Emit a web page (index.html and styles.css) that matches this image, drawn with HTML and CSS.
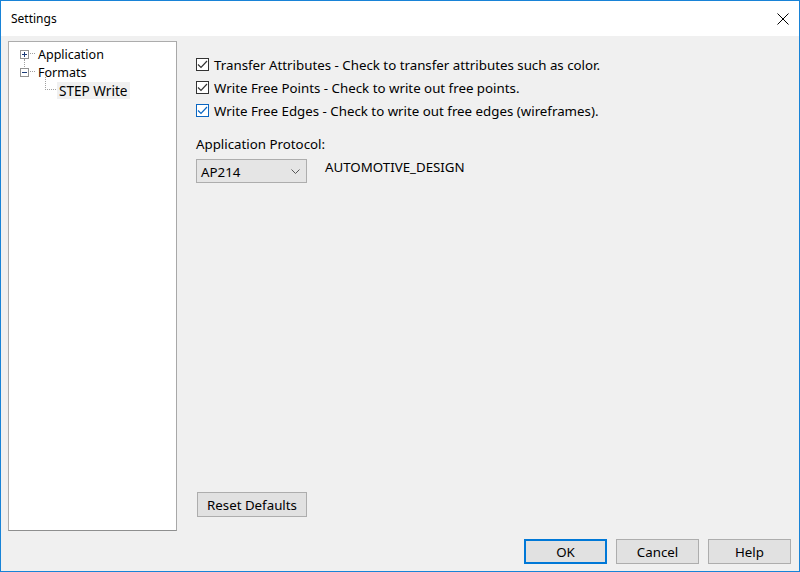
FILE: index.html
```html
<!DOCTYPE html>
<html lang="en">
<head>
  <meta charset="UTF-8" />
  <title>Settings</title>
  <link rel="stylesheet" href="styles.css">
</head>
<body>
  <div class="window">
    <div class="titlebar">
      <span class="title">Settings</span>
      <svg class="close" width="12" height="12" viewBox="0 0 12 12">
        <path d="M0.5 0.5 L11.5 11.5 M11.5 0.5 L0.5 11.5" stroke="#000" stroke-width="1" fill="none"/>
      </svg>
    </div>
    <div class="client">
      <div class="main">
        <div class="tree">
          <div class="node">
            <span class="expander">
              <svg width="9" height="9" viewBox="0 0 9 9">
                <rect x="0.5" y="0.5" width="8" height="8" fill="#fff" stroke="#919191"/>
                <path d="M2 4.5 H7 M4.5 2 V7" stroke="#1c3c78" stroke-width="1"/>
              </svg>
            </span>
            <span class="dots"></span>
            <span class="label">Application</span>
          </div>
          <div class="node">
            <span class="expander">
              <svg width="9" height="9" viewBox="0 0 9 9">
                <rect x="0.5" y="0.5" width="8" height="8" fill="#fff" stroke="#919191"/>
                <path d="M2 4.5 H7" stroke="#1c3c78" stroke-width="1"/>
              </svg>
            </span>
            <span class="dots"></span>
            <span class="label">Formats</span>
          </div>
          <div class="node child">
            <span class="elbow"></span>
            <span class="label selected">STEP Write</span>
          </div>
        </div>

        <div class="panel">
          <label class="check">
            <span class="box"><svg width="11" height="9" viewBox="0 0 11 9"><path d="M1 4.5 L4 7.5 L10 1" stroke="#333" stroke-width="1.2" fill="none"/></svg></span>
            Transfer Attributes - Check to transfer attributes such as color.
          </label>
          <label class="check">
            <span class="box"><svg width="11" height="9" viewBox="0 0 11 9"><path d="M1 4.5 L4 7.5 L10 1" stroke="#333" stroke-width="1.2" fill="none"/></svg></span>
            Write Free Points - Check to write out free points.
          </label>
          <label class="check">
            <span class="box focus"><svg width="11" height="9" viewBox="0 0 11 9"><path d="M1 4.5 L4 7.5 L10 1" stroke="#0a66c2" stroke-width="1.2" fill="none"/></svg></span>
            Write Free Edges - Check to write out free edges (wireframes).
          </label>

          <div class="field-label">Application Protocol:</div>
          <div class="protocol">
            <div class="combo">
              <span>AP214</span>
              <svg width="9" height="5" viewBox="0 0 9 5"><path d="M0.5 0.5 L4.5 4.5 L8.5 0.5" stroke="#555" fill="none"/></svg>
            </div>
            <span class="protocol-name">AUTOMOTIVE_DESIGN</span>
          </div>

          <div class="spacer"></div>
          <button class="btn reset">Reset Defaults</button>
        </div>
      </div>

      <div class="actions">
        <button class="btn default">OK</button>
        <button class="btn">Cancel</button>
        <button class="btn">Help</button>
      </div>
    </div>
  </div>
</body>
</html>
```

FILE: styles.css
```css
/* Classic Windows 10 dialog look */
body {
  margin: 0;
  font-family: 'Noto Sans', 'Open Sans', sans-serif;
  font-size: 13.3px;
  color: #000;
  background: #fff;
}
.window {
  width: 800px;
  height: 572px;
  box-sizing: border-box;
  border: 1px solid #1883d7;
  display: flex;
  flex-direction: column;
}
.titlebar {
  height: 35px;
  flex: none;
  background: #fff;
  display: flex;
  align-items: center;
  justify-content: space-between;
  padding: 0 10px 0 10px;
}
.title {
  font-size: 12px;
  margin-top: -1px;
}
.close {
  display: block;
}
.client {
  flex: 1;
  background: #f0f0f0;
  display: flex;
  flex-direction: column;
  padding: 5px 8px 7px 7px;
  min-height: 0;
}
.main {
  flex: 1;
  display: flex;
}

/* tree view */
.tree {
  width: 169px;
  box-sizing: border-box;
  background: #fff;
  border: 1px solid #acacac;
  border-bottom-color: #8e8f8f;
  border-right-color: #a8a8a8;
  padding: 3px 0 0 11px;
  font-size: 12.5px;
}
.node {
  display: flex;
  align-items: center;
  height: 18px;
  position: relative;
}
.expander {
  width: 9px;
  height: 9px;
  display: block;
}
.expander svg {
  display: block;
}
.dots {
  width: 5px;
  height: 1px;
  margin: 0 1px 0 1px;
  border-top: 1px dotted #a0a0a0;
}
.node:first-child::after {
  content: '';
  position: absolute;
  left: 4px;
  top: 14px;
  height: 8px;
  border-left: 1px dotted #a0a0a0;
}
.label {
  padding: 0 2px;
  line-height: 17px;
}
.child {
  padding-left: 25px;
}
.elbow {
  position: absolute;
  left: 25px;
  top: -4px;
  width: 10px;
  height: 12px;
  border-left: 1px dotted #a0a0a0;
  border-bottom: 1px dotted #a0a0a0;
}
.child .label {
  margin-left: 12px;
  font-size: 13.6px;
}
.selected {
  background: #f0f0f0;
}

/* settings panel */
.panel {
  flex: 1;
  margin-left: 19px;
  padding-top: 12px;
  padding-bottom: 14px;
  display: flex;
  flex-direction: column;
  align-items: flex-start;
}
.check {
  display: flex;
  align-items: center;
  height: 23px;
}
.box {
  width: 13px;
  height: 13px;
  box-sizing: border-box;
  border: 1px solid #333;
  background: #fff;
  margin-right: 5px;
  display: flex;
  align-items: center;
  justify-content: center;
}
.box.focus {
  border-color: #0a66c2;
}
.field-label {
  margin-top: 13px;
  line-height: 18px;
}
.protocol {
  display: flex;
  align-items: flex-start;
  margin-top: 6px;
}
.combo {
  width: 111px;
  height: 24px;
  box-sizing: border-box;
  border: 1px solid #adadad;
  background: #e5e5e5;
  display: flex;
  align-items: center;
  justify-content: space-between;
  padding: 0 6px 0 4px;
}
.combo span {
  margin-top: 2px;
}
.protocol-name {
  margin-left: 18px;
  line-height: 17px;
}
.spacer {
  flex: 1;
}

/* buttons */
.btn {
  font-family: inherit;
  font-size: 13.3px;
  color: #000;
  background: #e1e1e1;
  border: 1px solid #adadad;
  height: 25px;
  margin: 0;
  padding: 0;
  box-sizing: border-box;
}
.reset {
  width: 110px;
  margin-left: 1px;
}
.actions {
  flex: none;
  display: flex;
  justify-content: flex-end;
  gap: 9px;
  margin-top: 8px;
}
.actions .btn {
  width: 83px;
}
.btn.default {
  border: 2px solid #0078d7;
}
```
